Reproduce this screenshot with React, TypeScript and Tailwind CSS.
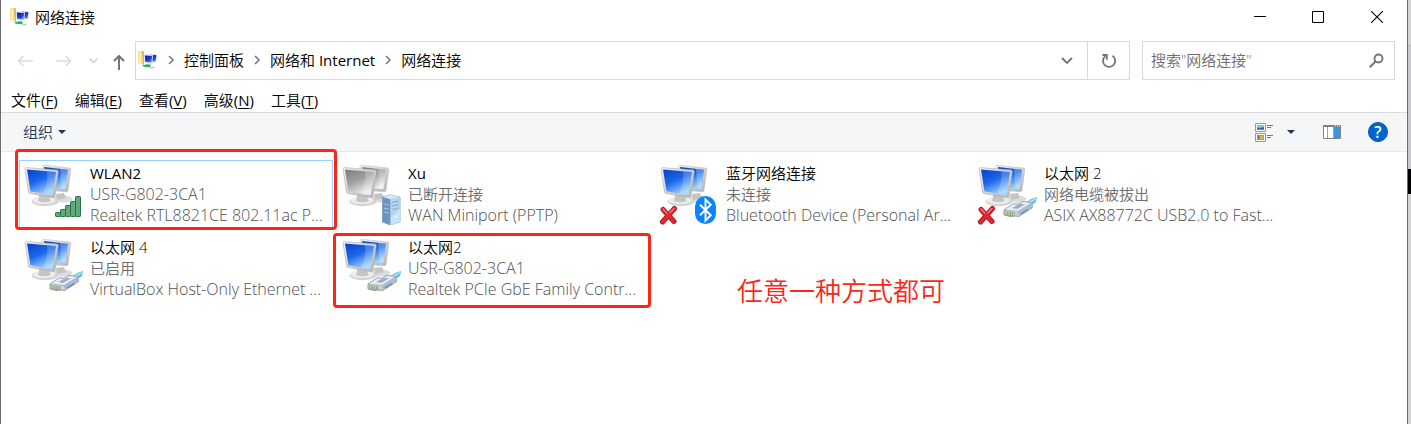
import React, { useId } from "react";

type Badge = "signal" | "server" | "bluetooth" | "cable";

interface Connection {
  name: string;
  status: string;
  device: string;
  badge: Badge;
  dimmed?: boolean;
  failed?: boolean;
  focused?: boolean;
  mark?: "tall" | "short";
}

const connections: Connection[] = [
  { name: "WLAN2", status: "USR-G802-3CA1", device: "Realtek RTL8821CE 802.11ac P...", badge: "signal", focused: true, mark: "tall" },
  { name: "Xu", status: "已断开连接", device: "WAN Miniport (PPTP)", badge: "server", dimmed: true },
  { name: "蓝牙网络连接", status: "未连接", device: "Bluetooth Device (Personal Ar...", badge: "bluetooth", failed: true },
  { name: "以太网 2", status: "网络电缆被拔出", device: "ASIX AX88772C USB2.0 to Fast...", badge: "cable", failed: true },
  { name: "以太网 4", status: "已启用", device: "VirtualBox Host-Only Ethernet ...", badge: "cable" },
  { name: "以太网2", status: "USR-G802-3CA1", device: "Realtek PCIe GbE Family Contr...", badge: "cable", mark: "short" },
];

const markInset = {
  tall: "-top-[11px] -right-1 bottom-1 -left-1",
  short: "-top-px right-0 bottom-0 -left-1",
};

const isChinese = (text: string) => /[\u4e00-\u9fff]/.test(text);

const menus = [
  { label: "文件", key: "F" },
  { label: "编辑", key: "E" },
  { label: "查看", key: "V" },
  { label: "高级", key: "N" },
  { label: "工具", key: "T" },
];

const crumbs = [
  { label: "控制面板" },
  { label: "网络和", latin: " Internet" },
  { label: "网络连接" },
];

function FolderNetIcon() {
  const id = useId();
  return (
    <svg width="20" height="20" viewBox="0 0 20 20" className="shrink-0" aria-hidden="true">
      <defs>
        <linearGradient id={id} x1="0" y1="0" x2="1" y2="1">
          <stop offset="0" stopColor="#0a1aa8" />
          <stop offset="0.6" stopColor="#1d3fd8" />
          <stop offset="1" stopColor="#8cbcf8" />
        </linearGradient>
      </defs>
      <path d="M0 1.500l4-.7 2 1v13l-5-1.500-1-1z" fill="#f3df8e" />
      <path d="M4 .8l2 1v13l-1-.3z" fill="#d9b75a" />
      <path d="M1 2.500l2-.3v11l-2-.7z" fill="#fbf0b8" />
      <path d="M12 4l7 .8-.8 7.700-6-.5z" fill="#c9d2ea" />
      <path d="M12.500 4.700l5.900.6-.7 6-5-.3z" fill={`url(#${id})`} />
      <path d="M6 4.500l9 .5-.5 8.500-8-1z" fill="#d5dcee" />
      <path d="M7 5.500l7 .5-.4 6.500-6.400-.9z" fill={`url(#${id})`} />
      <path d="M9 13.500l3 .3 1 1.200H8z" fill="#b8bfc8" />
      <path d="M4 15.500l4-1 5 .8-1 2-6-.6z" fill="#1fb64b" />
      <path d="M11 18l4-1.300 2 .6-3 1.500z" fill="#b4c7bd" />
    </svg>
  );
}

function Monitors({ dimmed }: { dimmed?: boolean }) {
  const id = useId();
  const screen = `${id}s`;
  const frame = `${id}f`;
  return (
    <>
      <defs>
        <linearGradient id={screen} x1="0" y1="0" x2="0.500" y2="1">
          <stop offset="0" stopColor={dimmed ? "#7d7d7d" : "#0743c8"} />
          <stop offset="0.500" stopColor={dimmed ? "#a0a0a0" : "#1a66ea"} />
          <stop offset="1" stopColor={dimmed ? "#ececec" : "#9cd0ff"} />
        </linearGradient>
        <linearGradient id={frame} x1="0" y1="0" x2="1" y2="1">
          <stop offset="0" stopColor="#f2f2f2" />
          <stop offset="1" stopColor="#b4b4b4" />
        </linearGradient>
      </defs>
      <ellipse cx="37" cy="34" rx="10.500" ry="3.500" fill="#dcdcdc" />
      <path d="M31 29l8-1 2 5-9 2z" fill="#c4c4c4" />
      <path d="M17 1.500q0-1.500 1.500-1.300L44.500 3q1.500.2 1.400 1.500L43 25.500q-.3 1.500-1.700 1.300L20 25z" fill={`url(#${frame})`} stroke="#b9b9b9" strokeWidth=".5" />
      <path d="M19 2l24 2.700-2.600 19.500L22 22.500z" fill={`url(#${screen})`} />
      <path d="M35 3.800l8 1-2.600 19.400-4-.4z" fill="#fff" opacity=".24" />
      <ellipse cx="20" cy="36.500" rx="13.500" ry="4.700" fill="#d4d4d4" />
      <ellipse cx="19" cy="35.200" rx="11.500" ry="3.800" fill="#ededed" />
      <path d="M13.500 28l11 1.500q-.8 4 1.500 6.500-7 2.500-13 0 2-4 .5-8z" fill="#c5c5c5" />
      <path d="M0 4Q-.1 2.500 1.500 2.600L32 5q1.500.2 1.300 1.700L30 31q-.3 1.800-2 1.600L5 28.500q-1.400-.3-1.500-1.500z" fill={`url(#${frame})`} stroke="#acacac" strokeWidth=".6" />
      <path d="M2 4.600L31 7l-3.500 23.200L5.500 26.300z" fill={`url(#${screen})`} />
      <path d="M22 6.200L31 7l-3.500 23.200-9.500-1.700C22 20 23 13 22 6.200z" fill="#fff" opacity=".2" />
    </>
  );
}

function SignalBadge() {
  const bars = [
    [30.500, 47.500, 4],
    [35.500, 44.500, 7],
    [40.500, 40.500, 11],
    [45.500, 36.500, 15],
    [50.500, 31.500, 20],
  ];
  return (
    <g fill="#5faa79" stroke="#2d7047" strokeWidth="1">
      {bars.map(([x, y, h]) => (
        <rect key={x} x={x} y={y} width="5" height={h} rx=".8" />
      ))}
    </g>
  );
}

function ServerBadge() {
  return (
    <g strokeLinejoin="round" transform="translate(-1 -1)">
      <path d="M40.500 33l8-2 9.500 2v25l-10 3-7.500-3z" fill="#a9cbe8" stroke="#7b9fc1" strokeWidth=".8" />
      <path d="M40.500 33l8 2v26l-8-3z" fill="#6c95bd" />
      <path d="M48.500 35l9.500-2v25l-9.500 3z" fill="#b4d4ee" />
      <path d="M40.500 33l8-2 9.500 2-9.500 2z" fill="#d7eaf8" />
      <path d="M50 38.500l6.500-1.300M50 42l6.500-1.300M50 45.500l6.500-1.300" stroke="#86add0" strokeWidth="1.200" />
      <path d="M42 40l5 1.200M42 44l5 1.200M42 48l5 1.200" stroke="#a4c7e4" strokeWidth="1" />
      <path d="M49 53l9-8v13l-9 3z" fill="#e4f3fd" opacity=".45" />
      <circle cx="53.500" cy="53" r="1.100" fill="#e9f6ff" />
    </g>
  );
}

function BluetoothBadge() {
  return (
    <g>
      <rect x="34" y="31" width="21" height="28" rx="10.500" fill="#0a84ff" />
      <path d="M39 39.700l10.800 10.500-5.300 5.300V34.500l5.300 5.300L39 50.300" fill="none" stroke="#fff" strokeWidth="1.900" />
    </g>
  );
}

function CableBadge() {
  return (
    <g strokeLinejoin="round" transform="translate(0 -2)">
      <path d="M46 40l6-4 6-2-1 5-7 4.500z" fill="#5bbbe2" />
      <path d="M49 38.500l8.500-4-.5 2-6 4z" fill="#a9def4" />
      <path d="M25 47l9-6 5 .3 5-2.800 9 1.200.5 5-14 9-5-1.500-2.500 1.500-7-1.700z" fill="#c9d4e5" stroke="#8494b0" strokeWidth=".9" />
      <path d="M25 47l9-6 5 .3 5-2.800 9 1.200-14 8.800z" fill="#e6edf5" stroke="#93a3ba" strokeWidth=".7" />
      <path d="M39 48.500l14-8.800.5 5-14 9z" fill="#a9bad4" />
      <path d="M33 45l8-4.200 5 .7-8 4.500z" fill="#a0aec5" />
      <path d="M26 48.300l10 1.300v4.300l-9.500-2z" fill="#8e9a9c" />
      <path d="M27.500 48.500v3M30 49v3M32.500 49.300v3M35 49.500v3.500" stroke="#dedb60" strokeWidth="1.200" />
      <path d="M42 51l7-4.500" stroke="#72829f" strokeWidth="1.200" />
    </g>
  );
}

function ConnectionIcon({ badge, dimmed, failed }: Pick<Connection, "badge" | "dimmed" | "failed">) {
  return (
    <svg width="62" height="62" viewBox="-2 -2 62 62" className="shrink-0" aria-hidden="true">
      <Monitors dimmed={dimmed} />
      {badge === "signal" && <SignalBadge />}
      {badge === "server" && <ServerBadge />}
      {badge === "bluetooth" && <BluetoothBadge />}
      {badge === "cable" && <CableBadge />}
      {failed && (
        <g strokeLinecap="round">
          <path d="M2 44.500l11 12M13.500 43.500L1.500 57" stroke="#a90d16" strokeWidth="5" />
          <path d="M2 44.500l11 12M13.500 43.500L1.500 57" stroke="#e32636" strokeWidth="3.400" />
          <path d="M2 44l4 4M13 43.500l-4 4" stroke="#f5808a" strokeWidth="1.200" />
        </g>
      )}
    </svg>
  );
}

function Chevron() {
  return (
    <svg width="8" height="10" viewBox="0 0 8 10" className="shrink-0" aria-hidden="true">
      <path d="M2 1l4 4-4 4" fill="none" stroke="#7b7b7b" strokeWidth="1.600" />
    </svg>
  );
}

function Caret() {
  return (
    <svg width="8" height="4" viewBox="0 0 8 4" className="shrink-0" aria-hidden="true">
      <path d="M0 0h8L4 4z" fill="#1e395b" />
    </svg>
  );
}

function ConnectionTile(c: Connection) {
  const detail = (text: string) => (isChinese(text) ? "text-[15px] text-[#6d6d6d]" : "text-[16px] text-[#505050]");
  return (
    <li className="relative h-[74px]">
      <button
        type="button"
        className={`flex h-[70px] w-full items-start border pt-[2px] pl-[3px] text-left whitespace-nowrap ${c.focused ? "border-[#99d1ff]" : "border-transparent"}`}
      >
        <ConnectionIcon badge={c.badge} dimmed={c.dimmed} failed={c.failed} />
        <span className="ml-[5px] flex flex-col">
          <span className={`leading-[21px] ${isChinese(c.name) ? "" : "font-normal"}`}>{c.name}</span>
          <span className={`leading-[21px] ${detail(c.status)}`}>{c.status}</span>
          <span className={`leading-[21px] ${detail(c.device)}`}>{c.device}</span>
        </span>
      </button>
      {c.mark && (
        <span className={`pointer-events-none absolute rounded-[4px] border-3 border-[#fb2617] ${markInset[c.mark]}`} />
      )}
    </li>
  );
}

export default function App() {
  return (
    <div className="flex min-h-screen font-['Open_Sans','Noto_Sans_CJK_SC',sans-serif] text-[15px] font-[350] text-black">
      <div className="flex min-w-0 grow flex-col border-x border-[#6e6e6e] bg-white">
        <header className="flex h-[34px] items-center pl-[9px]">
          <FolderNetIcon />
          <h1 className="ml-[5px] grow leading-5">网络连接</h1>
          <div className="flex h-full">
            <button type="button" aria-label="最小化" className="flex w-[58px] items-center justify-center">
              <svg width="12" height="12" viewBox="0 0 12 12"><path d="M0 5.500h12" stroke="#000" /></svg>
            </button>
            <button type="button" aria-label="最大化" className="flex w-[58px] items-center justify-center">
              <svg width="12" height="12" viewBox="0 0 12 12"><path d="M.5.5h11v11H.5z" fill="none" stroke="#000" /></svg>
            </button>
            <button type="button" aria-label="关闭" className="flex w-[60px] items-center justify-center">
              <svg width="12" height="12" viewBox="0 0 12 12"><path d="M0 0l12 12M12 0L0 12" stroke="#000" strokeWidth="1.100" /></svg>
            </button>
          </div>
        </header>

        <div className="mt-[7px] flex h-[39px] items-center pr-3 pl-4">
          <nav className="flex w-[118px] shrink-0 items-center" aria-label="导航">
            <button type="button" aria-label="后退">
              <svg width="16" height="12" viewBox="0 0 16 12"><path d="M6.500 1L1.500 6l5 5M1.500 6H16" fill="none" stroke="#dcdcdc" strokeWidth="1.700" /></svg>
            </button>
            <button type="button" aria-label="前进" className="ml-[23px]">
              <svg width="16" height="12" viewBox="0 0 16 12"><path d="M9.500 1l5 5-5 5M14.500 6H0" fill="none" stroke="#dcdcdc" strokeWidth="1.700" /></svg>
            </button>
            <button type="button" aria-label="最近位置" className="ml-[17px]">
              <svg width="9" height="6" viewBox="0 0 9 6"><path d="M.7.7l3.800 3.800L8.300.7" fill="none" stroke="#d5d5d5" strokeWidth="1.700" /></svg>
            </button>
            <button type="button" aria-label="上移" className="mt-1 ml-[15px]">
              <svg width="12" height="15" viewBox="0 0 12 15"><path d="M1 6l5-5 5 5M6 1v14" fill="none" stroke="#757575" strokeWidth="2" /></svg>
            </button>
          </nav>
          <div className="flex h-full grow border border-[#d9d9d9]">
            <div className="flex grow items-center pb-px pl-[2px]">
              <FolderNetIcon />
              {crumbs.map((crumb) => (
                <span key={crumb.label} className="flex items-center">
                  <span className="mx-[9px] flex"><Chevron /></span>
                  <a href="#" className="leading-5 whitespace-pre">
                    {crumb.label}
                    {crumb.latin && <span className="font-normal">{crumb.latin}</span>}
                  </a>
                </span>
              ))}
            </div>
            <button type="button" aria-label="展开地址" className="flex w-10 items-center justify-center">
              <svg width="12" height="8" viewBox="0 0 12 8"><path d="M1 1l5 5 5-5" fill="none" stroke="#747474" strokeWidth="1.800" /></svg>
            </button>
            <button type="button" aria-label="刷新" className="flex w-[42px] items-center justify-center border-l border-[#d9d9d9]">
              <svg width="16" height="16" viewBox="0 0 16 16"><path d="M11.500 2.800A6.100 6.100 0 1 1 4.300 3.100M1.500 2h4.300v4.800" fill="none" stroke="#747474" strokeWidth="1.800" /></svg>
            </button>
          </div>
          <div className="ml-3 flex h-full w-[253px] shrink-0 items-center border border-[#d9d9d9] pr-[10px] pl-2">
            <input aria-label="搜索" placeholder={'搜索"网络连接"'} className="min-w-0 grow outline-none placeholder:text-[#6d6d6d]" />
            <svg width="15" height="15" viewBox="0 0 15 15" className="shrink-0"><circle cx="9.500" cy="5.500" r="4" fill="none" stroke="#747474" strokeWidth="1.900" /><path d="M6.500 8.500L.8 14.200" stroke="#747474" strokeWidth="2" /></svg>
          </div>
        </div>

        <nav className="flex h-8 items-center gap-[17px] pt-2 pl-[10px]" aria-label="菜单">
          {menus.map((m) => (
            <button key={m.key} type="button" className="leading-5">
              {m.label}
              <span className="font-normal">(<span className="underline underline-offset-2">{m.key}</span>)</span>
            </button>
          ))}
        </nav>

        <div className="flex h-10 items-center border-t border-b border-[#dadbdc] border-b-[#e8e8e9] bg-[#f5f6f7] pr-[19px] pl-[22px]">
          <button type="button" className="flex items-center gap-[5px] text-[#1e395b]">
            组织 <Caret />
          </button>
          <span className="grow" />
          <button type="button" aria-label="更改视图">
            <svg width="18" height="19" viewBox="0 0 18 19">
              <path d="M.5.5h10v8H.5zM.5 10.500h10v8H.5z" fill="#fff" stroke="#9a9a9a" />
              <path d="M2 2h7v5H2z" fill="#8cc0ee" /><path d="M2 4.500l3 .5 4-1v3H2z" fill="#2f6a90" /><path d="M2 6h7v1H2z" fill="#3fa0b0" />
              <path d="M2 12h7v5H2z" fill="#7fb45a" /><path d="M2 12h3v2H2z" fill="#5b92d8" /><path d="M5 13h3v3H5z" fill="#e0b850" /><path d="M3 14h2v2H3z" fill="#c4604a" />
              <path d="M12 2.500h6M12 4.500h4M12 12.500h6M12 14.500h4" stroke="#777" />
            </svg>
          </button>
          <button type="button" aria-label="更多选项" className="ml-[14px]"><Caret /></button>
          <button type="button" aria-label="预览窗格" className="ml-[28px]">
            <svg width="18" height="14" viewBox="0 0 18 14">
              <path d="M.5.5h17v13H.5z" fill="#fff" stroke="#818181" />
              <path d="M0 0h18v2H0z" fill="#818181" /><path d="M12 1h1M14 1h1M16 1h1" stroke="#fff" />
              <path d="M11 2h6v11h-6z" fill="#3c96df" /><path d="M4.500 2v11M10.500 2v11" stroke="#a3a3a3" />
            </svg>
          </button>
          <button type="button" aria-label="帮助" className="ml-[27px] flex size-5 items-center justify-center rounded-full border border-[#0a50a4] bg-[#0067cf] text-base font-semibold text-white">?</button>
        </div>

        <main className="relative grow pt-2 pl-[18px]">
          <ul className="grid grid-cols-[repeat(auto-fill,314px)] gap-x-1">
            {connections.map((c) => (
              <ConnectionTile key={c.name} {...c} />
            ))}
          </ul>
          <p className="absolute top-[120px] left-[736px] text-[26px] leading-[38px] whitespace-nowrap text-[#fb2617]">任意一种方式都可</p>
        </main>
      </div>
      <div className="flex w-[3px] shrink-0 flex-col bg-[#d4d4d4]" aria-hidden="true">
        <span className="h-[46px] border-b border-[#bcbcbc]" />
        <span className="h-[123px] bg-[#c9cacd]" />
        <span className="h-[25px] bg-black" />
      </div>
    </div>
  );
}
